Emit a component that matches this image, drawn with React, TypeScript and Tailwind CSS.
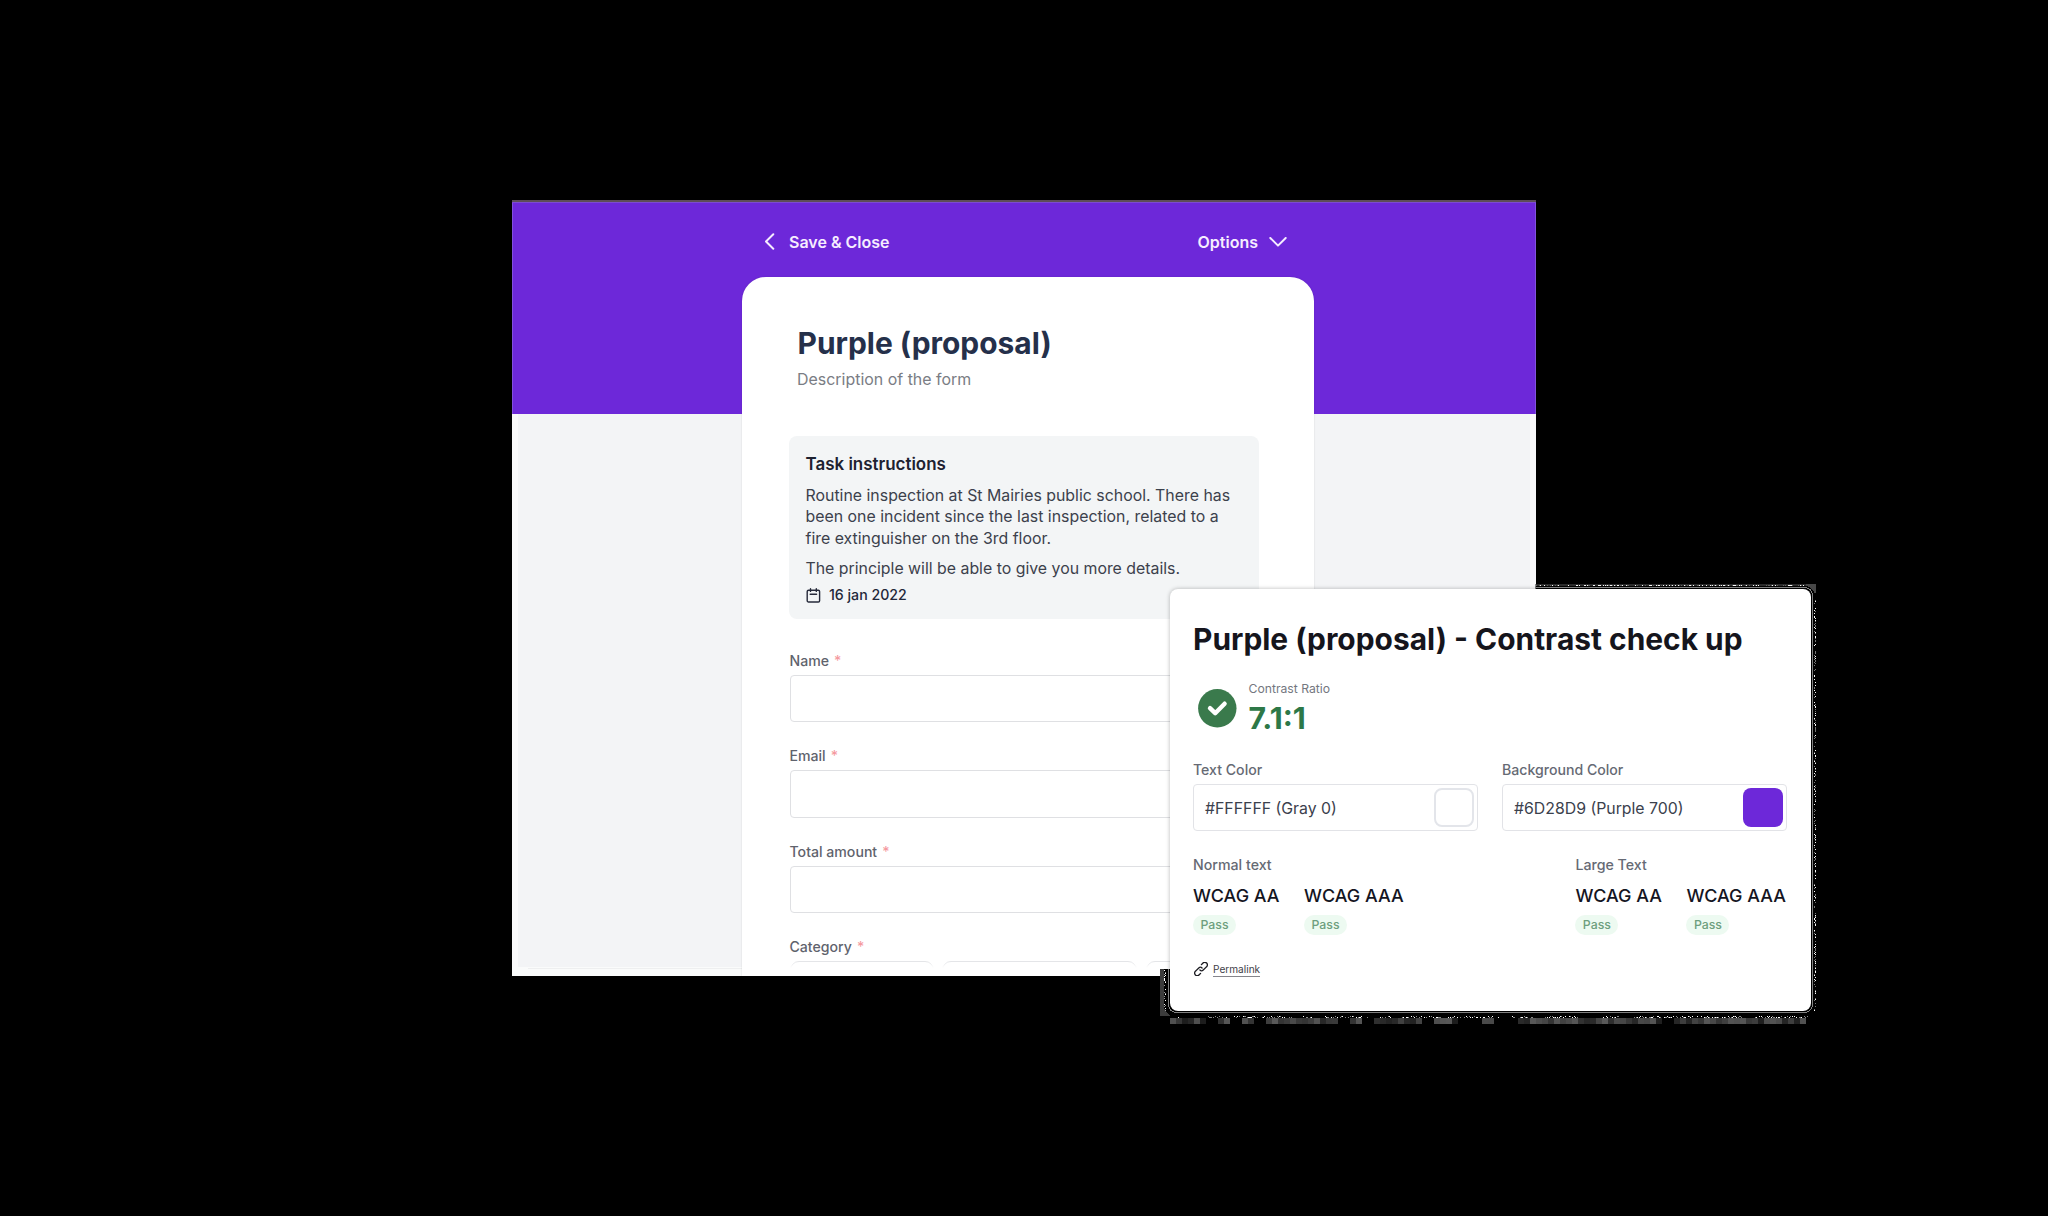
import React from "react";

const noise = (i: number) => {
  const v = Math.sin(i * 127.1 + 11.7) * 43758.5453;
  return v - Math.floor(v);
};

function FringeNoise() {
  const bottom = [];
  for (let x = 18; x < 650; x++) {
    const gap = noise(Math.floor(x / 11) + 500) < 0.13;
    if (!gap && noise(x) > 0.5) {
      bottom.push(<rect key={`b${x}`} x={x} y={noise(x + 900) > 0.35 ? 437 : 436} width={1} height={1} fill={noise(x + 77) > 0.5 ? "#fff" : "#888"} />);
    }
  }
  const blocks = [];
  for (let i = 0; i < 106; i++) {
    if (noise(Math.floor(i / 2) + 40) < 0.17) continue;
    const g = Math.round(28 + noise(i + 300) * 62);
    blocks.push(<rect key={`k${i}`} x={10 + i * 6} y={438} width={6} height={6} fill={`rgb(${g},${g},${g})`} />);
  }
  const right = [];
  for (let y = 20; y < 432; y++) {
    if (noise(y + 2000) > 0.5) {
      right.push(<rect key={`r${y}`} x={noise(y + 31) > 0.35 ? 655 : 654} y={y} width={1} height={1} fill={noise(y + 55) > 0.5 ? "#fff" : "#777"} />);
    }
  }
  const top = [];
  for (let x = 376; x < 644; x++) {
    if (noise(x + 4000) > 0.55) {
      top.push(<rect key={`t${x}`} x={x} y={5} width={1} height={1} fill={noise(x + 66) > 0.5 ? "#fff" : "#666"} />);
    }
  }
  const left = [];
  for (let y = 390; y < 434; y++) {
    if (noise(y + 6000) > 0.4) {
      left.push(<rect key={`l${y}`} x={noise(y + 8) > 0.5 ? 5 : 4} y={y} width={1} height={1} fill={noise(y + 19) > 0.5 ? "#fff" : "#999"} />);
    }
  }
  return (
    <svg className="absolute -left-[10px] -top-[9px]" width={670} height={450} shapeRendering="crispEdges" aria-hidden="true">
      <defs>
        <clipPath id="outside">
          <path d="M375.500 0H670V450H0V389H375.500Z" />
        </clipPath>
      </defs>
      <g clipPath="url(#outside)">
        <rect x={0} y={389} width={10} height={47} fill="#3c3c3c" />
        <rect x={375} y={4} width={271} height={2} fill="#2c2c2c" />
        <rect x={646} y={4} width={10} height={9} fill="#484848" />
        <rect x={4} y={6} width={651} height={430} rx={10} fill="#000" />
        <rect x={8.500} y={7.500} width={644} height={425} rx={8} fill="none" stroke="#8a8a8a" strokeWidth={1} />
        {blocks}
        {bottom}
        {right}
        {top}
        {left}
      </g>
    </svg>
  );
}

function Field({ label, children }: { label: string; children?: React.ReactNode }) {
  return (
    <div className="mb-[25px]">
      <div className="flex h-[18px] items-start gap-[5px] text-[14.12px] font-medium leading-[18px] text-[#5f636d]">
        <span>{label}</span>
        <span className="text-[#f59a9f]">*</span>
      </div>
      {children ?? <div className="mt-[5px] h-[47.400px] rounded-[4px] border border-[#dfe0e3] bg-white" />}
    </div>
  );
}

function ColorField({ label, value, swatch }: { label: string; value: string; swatch: string }) {
  return (
    <div className="w-[285px]">
      <div className="text-[14.12px] font-medium leading-[18px] text-[#666a74]">{label}</div>
      <div className="mt-[5px] flex h-[47px] items-center justify-between rounded-[4px] border border-[#e2e3e7] bg-white pl-[11px] pr-[3px]">
        <span className="pt-[2px] text-[15.83px] leading-5 text-[#3b414d]">{value}</span>
        <span className={`h-[39px] w-[40px] rounded-[8px] ${swatch}`} />
      </div>
    </div>
  );
}

function Level({ name }: { name: string }) {
  return (
    <div>
      <div className="text-[17.95px] font-medium leading-6 text-[#14151f]">{name}</div>
      <div className="mt-[7px] flex h-5 w-[43px] items-center justify-center rounded-full bg-[#edfaf1] text-[12.3px] font-medium text-[#6d9f7e]">Pass</div>
    </div>
  );
}

function Levels({ title }: { title: string }) {
  return (
    <div>
      <div className="text-[14.2px] font-medium leading-[18px] text-[#666a74]">{title}</div>
      <div className="mt-[10px] flex gap-[24.500px]">
        <Level name="WCAG AA" />
        <Level name="WCAG AAA" />
      </div>
    </div>
  );
}

function ContrastCard() {
  return (
    <div className="absolute left-[1170px] top-[589px] h-[422px] w-[641px]">
      <FringeNoise />
      <section className="relative h-full rounded-[8px] bg-white pl-[23px] pr-6 pt-[31.500px] shadow-[0_0_4px_rgba(0,0,0,0.28)]">
        <h2 className="whitespace-nowrap text-[29.92px] font-bold leading-9 text-[#15151c]">Purple (proposal) - Contrast check up</h2>
        <div className="mt-[23.500px] flex pl-[4.500px]">
          <svg className="mt-[9px]" width={39} height={39} viewBox="0 0 39 39">
            <circle cx={19.300} cy={19.300} r={19.200} fill="#3a7a4c" />
            <path d="M12 19.200L17.200 24.200L26.600 14.700" fill="none" stroke="#fff" strokeWidth={4.400} strokeLinecap="round" strokeLinejoin="round" />
          </svg>
          <div className="ml-[12px]">
            <div className="relative top-px text-[12.2px] leading-4 text-[#747780]">Contrast Ratio</div>
            <div className="mt-1 text-[30.2px] font-bold leading-9 text-[#2d7847]">7.1:1</div>
          </div>
        </div>
        <div className="mt-[25px] flex justify-between">
          <ColorField label="Text Color" value="#FFFFFF (Gray 0)" swatch="border-2 border-[#e3e5ea] bg-white" />
          <ColorField label="Background Color" value="#6D28D9 (Purple 700)" swatch="bg-[#6d28d9]" />
        </div>
        <div className="mt-[25px] flex justify-between pr-px">
          <Levels title="Normal text" />
          <Levels title="Large Text" />
        </div>
        <div className="mt-[26px] flex h-4 items-center">
          <svg className="ml-px" width={14} height={14} viewBox="0 0 24 24" fill="none" stroke="#1c1c22" strokeWidth={2.300} strokeLinecap="round" strokeLinejoin="round">
            <path d="M13.828 10.172a4 4 0 0 0-5.656 0l-5 5a4.500 4.500 0 1 0 6.200 6.200l1.900-1.900" />
            <path d="M10.172 13.828a4 4 0 0 0 5.656 0l5-5a4.500 4.500 0 1 0-6.200-6.200l-1.900 1.900" />
          </svg>
          <span className="ml-[5px] mt-px border-b border-[#85858b] text-[10.1px] leading-[13px] text-[#3f4148]">Permalink</span>
        </div>
      </section>
    </div>
  );
}

export default function App() {
  return (
    <main className="relative h-[1216px] w-[2048px] overflow-hidden bg-black pt-[200px] font-['Inter',sans-serif]">
      <div className="relative mx-auto h-[776px] w-[1024px] overflow-hidden bg-[linear-gradient(#6d28d9_213.500px,#f3f4f6_213.500px)]">
        <div className="absolute inset-x-0 top-0 h-[3px] border-b border-[#7c4bd2] bg-[#5d4c58]" />
        <div className="absolute left-0 top-[3px] h-[211px] w-px bg-[#8250dd]" />
        <div className="absolute right-0 top-[3px] h-[211px] w-px bg-[#8250dd]" />
        <div className="absolute bottom-0 left-0 top-[214px] w-[6px] bg-[#fafafb]" />
        <div className="absolute bottom-0 right-0 top-[214px] w-[6px] bg-[#fafafb]" />
        <div className="absolute inset-x-0 bottom-0 h-[9px] bg-[#fafbfb]" />
        <div className="absolute bottom-[7px] left-[16px] h-px w-[214px] bg-[#eeeff0]" />

        <header className="flex h-[77px] items-center justify-between pl-[253px] pr-[249px] pt-[6px] text-[16px] font-semibold leading-5 text-[#f6edff]">
          <div className="flex items-center">
            <svg width={10} height={17} viewBox="0 0 10 17" fill="none" stroke="#f6edff" strokeWidth={2} strokeLinecap="round" strokeLinejoin="round">
              <path d="M8.300 1.300L1 8.500L8.300 15.700" />
            </svg>
            <span className="ml-[14px]">Save &amp; Close</span>
          </div>
          <div className="flex items-center">
            <span>Options</span>
            <svg className="ml-[11px]" width={18} height={10} viewBox="0 0 18 10" fill="none" stroke="#f6edff" strokeWidth={2} strokeLinecap="round" strokeLinejoin="round">
              <path d="M1.300 1L9 8.600L16.700 1" />
            </svg>
          </div>
        </header>

        <article className="relative ml-[230px] h-[699px] w-[572px] overflow-hidden rounded-t-[24px] bg-white px-[47.500px] pt-[47.500px] shadow-[0_0_2px_rgba(0,0,0,0.14)]">
          <h1 className="pl-[8px] text-[29.95px] font-bold leading-9 text-[#25304a]">Purple (proposal)</h1>
          <p className="mt-[9.500px] pl-[7.500px] text-[15.95px] leading-5 text-[#7a7d84]">Description of the form</p>

          <div className="-ml-[0.500px] mt-[46px] h-[183px] w-[470px] rounded-[8px] bg-[#f3f5f6] pl-[16.500px] pt-[18px] text-[#3c414c]">
            <h3 className="text-[16.95px] font-semibold leading-5 text-[#1d2130]">Task instructions</h3>
            <p className="mt-[10.700px] whitespace-nowrap text-[15.88px] leading-[21.800px]">
              Routine inspection at St Mairies public school. There has<br />
              been one incident since the last inspection, related to a<br />
              fire extinguisher on the 3rd floor.
            </p>
            <p className="mt-[8.300px] text-[15.86px] leading-[21.800px]">The principle will be able to give you more details.</p>
            <div className="mt-[5px] flex h-5 items-center text-[14.15px] font-medium leading-5 text-[#23283a]">
              <svg width={15} height={15} viewBox="0 0 15 15" fill="none" stroke="#262a3a" strokeWidth={1.400} strokeLinecap="round" strokeLinejoin="round">
                <rect x={1.200} y={2.300} width={12.400} height={11.700} rx={1.300} />
                <path d="M4.500 0.800V3.400M10.300 0.800V3.400M4.200 6.200H10.600" />
              </svg>
              <span className="ml-[8.500px]">16 jan 2022</span>
            </div>
          </div>

          <form className="mt-[33px]">
            <Field label="Name" />
            <Field label="Email" />
            <Field label="Total amount" />
            <Field label="Category">
              <div className="mt-[5px] flex gap-[8.500px]">
                <div className="h-[47px] w-[144px] rounded-[9px] border border-[#e2e3e6]" />
                <div className="h-[47px] w-[195px] rounded-[9px] border border-[#e2e3e6]" />
                <div className="h-[47px] w-[120px] rounded-[9px] border border-[#e2e3e6]" />
              </div>
            </Field>
          </form>
          <div className="absolute inset-x-0 bottom-0 h-[15px] bg-[linear-gradient(rgba(255,255,255,0),#fff_7px)]" />
        </article>
      </div>
      <ContrastCard />
    </main>
  );
}
